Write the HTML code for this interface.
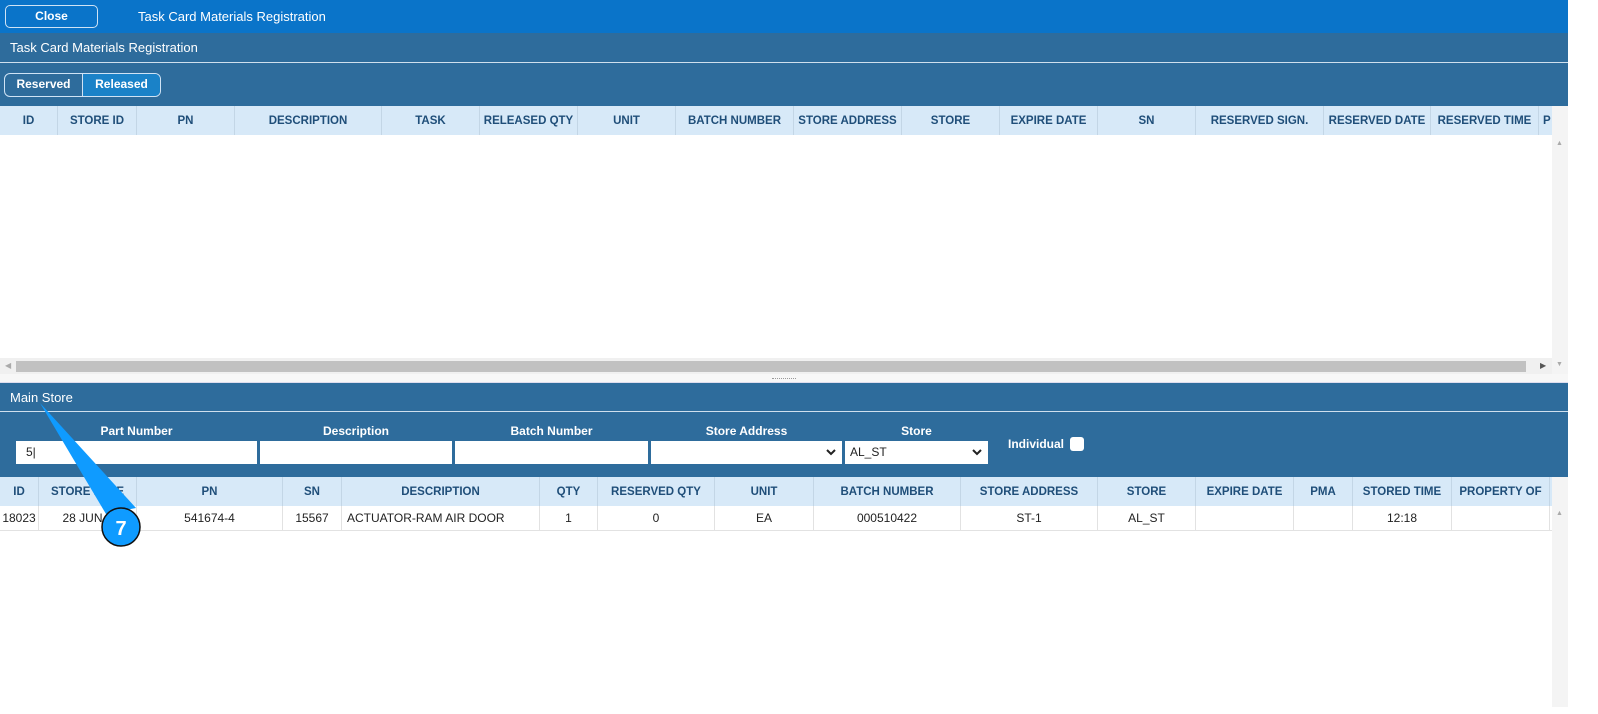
<!DOCTYPE html>
<html><head><style>
*{box-sizing:border-box;margin:0;padding:0}
body{width:1598px;height:714px;overflow:hidden;background:#fff;font-family:"Liberation Sans",sans-serif;position:relative}
.abs{position:absolute}
.top{left:0;top:0;width:1568px;height:33px;background:#0a74c9}
.dark{background:#2e6c9c}
.hdr{background:#d7e9f8;color:#1f4e79;font-size:11.5px;font-weight:bold}
.hdr div,.row div{position:absolute;top:0;height:100%;display:flex;align-items:center;justify-content:center;border-right:1px solid #c3d6e6;white-space:nowrap;overflow:hidden}
.row{font-size:12px;color:#222}
.row div{border-right:1px solid #e2e2e2}
.lbl{color:#fff;font-size:12px;font-weight:bold;text-align:center}
.inp{background:#fff;height:23px;top:441px;font-size:12px;padding-left:10px;line-height:23px;color:#222}
.chev{position:absolute;right:6px;top:8px}
</style></head><body>
<div class="abs top"></div>
<div class="abs" style="left:5px;top:5px;width:93px;height:23px;border:1px solid #cfe3f5;border-radius:5px;color:#fff;font-size:12px;font-weight:bold;text-align:center;line-height:20px">Close</div>
<div class="abs" style="left:138px;top:9px;color:#fff;font-size:13px">Task Card Materials Registration</div>
<div class="abs dark" style="left:0;top:33px;width:1568px;height:73px"></div>
<div class="abs" style="left:0;top:62px;width:1568px;height:1px;background:#cfe0ee"></div>
<div class="abs" style="left:10px;top:40px;color:#fff;font-size:13px">Task Card Materials Registration</div>
<div class="abs" style="left:4px;top:73px;width:157px;height:24px;border:1px solid #cfe3f5;border-radius:6px;overflow:hidden;display:flex;font-size:12px;font-weight:bold;color:#fff">
<div style="width:78px;text-align:center;line-height:21px;border-right:1px solid #cfe3f5">Reserved</div>
<div style="flex:1;text-align:center;line-height:21px;background:#1a82c8">Released</div></div>
<div class="abs hdr" style="left:0;top:106px;width:1552px;height:29px">
<div style="left:0;width:58px">ID</div><div style="left:58px;width:79px">STORE ID</div><div style="left:137px;width:98px">PN</div><div style="left:235px;width:147px">DESCRIPTION</div><div style="left:382px;width:98px">TASK</div><div style="left:480px;width:98px">RELEASED QTY</div><div style="left:578px;width:98px">UNIT</div><div style="left:676px;width:118px">BATCH NUMBER</div><div style="left:794px;width:108px">STORE ADDRESS</div><div style="left:902px;width:98px">STORE</div><div style="left:1000px;width:98px">EXPIRE DATE</div><div style="left:1098px;width:98px">SN</div><div style="left:1196px;width:128px">RESERVED SIGN.</div><div style="left:1324px;width:107px">RESERVED DATE</div><div style="left:1431px;width:108px">RESERVED TIME</div><div style="left:1539px;width:13px;justify-content:flex-start;border:none;padding-left:4px">P</div>
</div>
<div class="abs" style="left:1552px;top:106px;width:16px;height:268px;background:#f4f4f4"></div>
<div class="abs" style="left:1556px;top:140px;font-size:7px;color:#aaa">▲</div>
<div class="abs" style="left:1556px;top:361px;font-size:7px;color:#aaa">▼</div>
<div class="abs" style="left:0;top:358px;width:1552px;height:16px;background:#f0f0f0"></div>
<div class="abs" style="left:16px;top:361px;width:1510px;height:11px;background:#c1c1c1"></div>
<div class="abs" style="left:5px;top:361px;font-size:8px;color:#aaa">◀</div>
<div class="abs" style="left:1540px;top:361px;font-size:8px;color:#555">▶</div>
<div class="abs" style="left:0;top:374px;width:1568px;height:9px;background:#f7f7f7;border-bottom:1px solid #dde"></div>
<div class="abs" style="left:772px;top:378px;width:24px;height:2px;border-top:1px dotted #999"></div>
<div class="abs dark" style="left:0;top:383px;width:1568px;height:94px"></div>
<div class="abs" style="left:0;top:411px;width:1568px;height:1px;background:#cfe0ee"></div>
<div class="abs" style="left:10px;top:390px;color:#fff;font-size:13px">Main Store</div>
<div class="abs lbl" style="left:16px;top:424px;width:241px">Part Number</div>
<div class="abs lbl" style="left:260px;top:424px;width:192px">Description</div>
<div class="abs lbl" style="left:455px;top:424px;width:193px">Batch Number</div>
<div class="abs lbl" style="left:651px;top:424px;width:191px">Store Address</div>
<div class="abs lbl" style="left:845px;top:424px;width:143px">Store</div>
<div class="abs inp" style="left:16px;width:241px">5|</div>
<div class="abs inp" style="left:260px;width:192px"></div>
<div class="abs inp" style="left:455px;width:193px"></div>
<div class="abs inp" style="left:651px;width:191px"><svg class="chev" width="10" height="7"><path d="M1 1L5 5L9 1" stroke="#222" stroke-width="2" fill="none"/></svg></div>
<div class="abs inp" style="left:845px;width:143px;padding-left:5px">AL_ST<svg class="chev" width="10" height="7"><path d="M1 1L5 5L9 1" stroke="#222" stroke-width="2" fill="none"/></svg></div>
<div class="abs lbl" style="left:1008px;top:437px">Individual</div>
<div class="abs" style="left:1070px;top:437px;width:14px;height:14px;background:#fff;border-radius:3px"></div>
<div class="abs hdr" style="left:0;top:477px;width:1552px;height:29px">
<div style="left:0;width:39px">ID</div><div style="left:39px;width:98px">STORE DATE</div><div style="left:137px;width:146px">PN</div><div style="left:283px;width:59px">SN</div><div style="left:342px;width:198px">DESCRIPTION</div><div style="left:540px;width:58px">QTY</div><div style="left:598px;width:117px">RESERVED QTY</div><div style="left:715px;width:99px">UNIT</div><div style="left:814px;width:147px">BATCH NUMBER</div><div style="left:961px;width:137px">STORE ADDRESS</div><div style="left:1098px;width:98px">STORE</div><div style="left:1196px;width:98px">EXPIRE DATE</div><div style="left:1294px;width:59px">PMA</div><div style="left:1353px;width:99px">STORED TIME</div><div style="left:1452px;width:98px">PROPERTY OF</div>
</div>
<div class="abs" style="left:1552px;top:477px;width:16px;height:230px;background:#f4f4f4"></div>
<div class="abs" style="left:1556px;top:510px;font-size:7px;color:#aaa">▲</div>
<div class="abs row" style="left:0;top:506px;width:1552px;height:25px;border-bottom:1px solid #e2e2e2">
<div style="left:0;width:39px">18023</div><div style="left:39px;width:98px">28 JUN 2</div><div style="left:137px;width:146px">541674-4</div><div style="left:283px;width:59px">15567</div><div style="left:342px;width:198px;justify-content:flex-start;padding-left:5px">ACTUATOR-RAM AIR DOOR</div><div style="left:540px;width:58px">1</div><div style="left:598px;width:117px">0</div><div style="left:715px;width:99px">EA</div><div style="left:814px;width:147px">000510422</div><div style="left:961px;width:137px">ST-1</div><div style="left:1098px;width:98px">AL_ST</div><div style="left:1196px;width:98px"></div><div style="left:1294px;width:59px"></div><div style="left:1353px;width:99px">12:18</div><div style="left:1452px;width:98px"></div>
</div>
<svg class="abs" style="left:0;top:0" width="1598" height="714">
<polygon points="40,403 106,514 136,508" fill="#0f9bff"/>
<circle cx="121" cy="527" r="19" fill="#0f9bff" stroke="#111" stroke-width="1.5"/>
<text x="121" y="535" font-family="Liberation Sans" font-weight="bold" font-size="20" fill="#fff" text-anchor="middle">7</text>
</svg>
</body></html>
